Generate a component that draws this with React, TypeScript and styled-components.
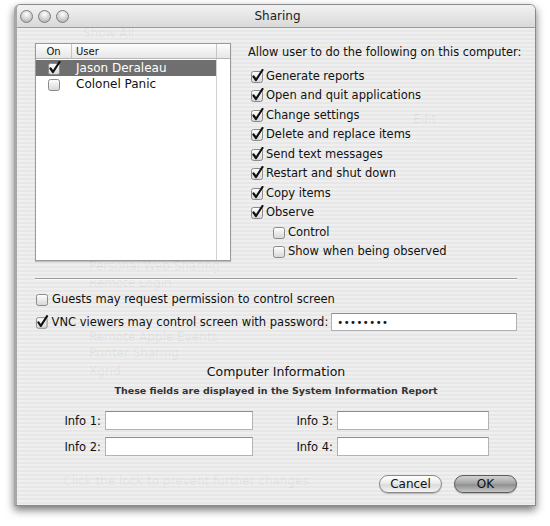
import React from "react";
import styled, { createGlobalStyle } from "styled-components";

const GlobalStyle = createGlobalStyle`
  html, body { margin: 0; padding: 0; background: #ffffff; }
  body { font-family: "DejaVu Sans", "Liberation Sans", sans-serif; color: #111; }
  * { box-sizing: border-box; }
`;

const Page = styled.div`
  width: 550px;
  height: 526px;
  padding: 4px 0 0 14px;
  background: #fff;
`;

const Window = styled.div`
  width: 522px;
  height: 502px;
  display: flex;
  flex-direction: column;
  border: 1px solid #8a8a8a;
  border-left: 3px solid #a8a8a8;
  border-radius: 6px 6px 0 0;
  overflow: hidden;
  box-shadow: 0 4px 9px rgba(0, 0, 0, 0.55);
`;

const TitleBar = styled.div`
  height: 23px;
  flex: none;
  display: grid;
  grid-template-columns: 80px 1fr 80px;
  align-items: center;
  padding-left: 3px;
  background: linear-gradient(#f2f2f2, #d9d9d9);
  border-bottom: 1px solid #9c9c9c;
`;

const Lights = styled.div`
  display: flex;
  gap: 5px;
`;

const Light = styled.span`
  width: 13px;
  height: 13px;
  border-radius: 50%;
  border: 1px solid #7d7d7d;
  background: radial-gradient(circle at 50% 30%, #ffffff 0%, #d0d0d0 55%, #a4a4a4 100%);
`;

const Title = styled.div`
  text-align: center;
  font-size: 12px;
  color: #222;
`;

const Content = styled.div`
  position: relative;
  flex: 1;
  display: flex;
  flex-direction: column;
  padding: 15px 18px 0 18px;
  background: repeating-linear-gradient(#efefef 0px, #efefef 2px, #e7e7e7 2px, #e7e7e7 4px);
`;

const GhostLayer = styled.div`
  position: absolute;
  inset: 0;
  pointer-events: none;
  font-size: 12px;
  color: rgba(0, 0, 0, 0.06);
`;

const Ghost = styled.div<{ $x: number; $y: number }>`
  position: absolute;
  left: ${(p) => p.$x}px;
  top: ${(p) => p.$y}px;
  white-space: nowrap;
`;

const Front = styled.div`
  position: relative;
  display: flex;
  flex-direction: column;
`;

const TopSection = styled.div`
  display: flex;
  gap: 17px;
  height: 218px;
`;

const UserList = styled.div`
  width: 196px;
  flex: none;
  display: flex;
  flex-direction: column;
  background: #fff;
  border: 1px solid #9a9a9a;
  box-shadow: 0 1px 1px rgba(0, 0, 0, 0.2);
`;

const ListHeader = styled.div`
  height: 15px;
  display: grid;
  grid-template-columns: 36px 145px 1fr;
  border-bottom: 1px solid #b5b5b5;
  background: linear-gradient(#fdfdfd, #e6e6e6);
  font-size: 10px;
`;

const HeaderCell = styled.div<{ $center?: boolean }>`
  display: flex;
  align-items: center;
  justify-content: ${(p) => (p.$center ? "center" : "flex-start")};
  padding-left: ${(p) => (p.$center ? "0" : "4px")};
  border-right: 1px solid #c4c4c4;
`;

const ListBody = styled.div`
  flex: 1;
  display: grid;
  grid-template-columns: 181px 1fr;
`;

const Rows = styled.div`
  display: flex;
  flex-direction: column;
  padding-top: 1px;
  border-right: 1px solid #d2d2d2;
`;

const Row = styled.div<{ $selected?: boolean }>`
  height: 16px;
  display: grid;
  grid-template-columns: 36px 1fr;
  align-items: center;
  font-size: 12px;
  color: ${(p) => (p.$selected ? "#fff" : "#111")};
  background: ${(p) => (p.$selected ? "#6f6f6f" : "transparent")};
`;

const RowCheck = styled.div`
  display: flex;
  justify-content: center;
`;

const RowName = styled.div`
  padding-left: 4px;
  white-space: nowrap;
`;

const Scroller = styled.div``;

const Permissions = styled.div`
  flex: 1;
  display: flex;
  flex-direction: column;
`;

const Heading = styled.div`
  font-size: 11.4px;
  line-height: 16px;
  margin: 1px 0 6px 0;
  white-space: nowrap;
`;

const CheckRow = styled.label<{ $indent?: number }>`
  display: flex;
  align-items: center;
  gap: 2px;
  height: 19.7px;
  padding-left: ${(p) => p.$indent ?? 2}px;
  font-size: 11.5px;
  white-space: nowrap;
`;

const Separator = styled.div`
  height: 1px;
  margin-top: 17px;
  background: #9d9d9d;
  border-bottom: 1px solid #fafafa;
  box-sizing: content-box;
`;

const OptionRow = styled.div<{ $top: number }>`
  display: flex;
  align-items: center;
  gap: 3px;
  height: 18px;
  margin-top: ${(p) => p.$top}px;
  font-size: 11.5px;
  white-space: nowrap;
`;

const PasswordField = styled.div`
  margin-left: auto;
  width: 192px;
  height: 18px;
  background: #fff;
  border: 1px solid #b0b0b0;
  border-top-color: #8e8e8e;
  display: flex;
  align-items: center;
  padding-left: 5px;
  font-size: 10px;
  letter-spacing: 0.5px;
`;

const InfoTitle = styled.div`
  margin-top: 33px;
  text-align: center;
  font-size: 12.5px;
  line-height: 16px;
`;

const InfoSubtitle = styled.div`
  margin-top: 5px;
  text-align: center;
  font-size: 9.5px;
  line-height: 12px;
  font-weight: bold;
  color: #333;
`;

const InfoGrid = styled.div`
  margin-top: 14px;
  display: grid;
  grid-template-columns: 66px 148px 76px 152px;
  column-gap: 4px;
  row-gap: 7px;
  align-items: center;
`;

const InfoLabel = styled.div`
  font-size: 11.5px;
  text-align: right;
  white-space: nowrap;
`;

const InfoField = styled.div`
  height: 19px;
  background: #fff;
  border: 1px solid #b3b3b3;
  border-top-color: #8c8c8c;
`;

const ButtonRow = styled.div`
  margin-top: 19px;
  display: flex;
  justify-content: flex-end;
  gap: 12px;
`;

const Button = styled.button<{ $default?: boolean }>`
  width: 63px;
  height: 18px;
  border-radius: 9px;
  font-family: inherit;
  font-size: 12px;
  color: #111;
  padding: 0;
  border: 1px solid ${(p) => (p.$default ? "#5d5d5d" : "#8a8a8a")};
  background: ${(p) =>
    p.$default
      ? "linear-gradient(#d2d2d2 0%, #a7a7a7 45%, #8f8f8f 55%, #c6c6c6 100%)"
      : "linear-gradient(#ffffff 0%, #ececec 45%, #dadada 55%, #f4f4f4 100%)"};
  box-shadow: 0 1px 1px rgba(0, 0, 0, 0.25);
`;

const CheckBox: React.FC<{ checked?: boolean }> = ({ checked }) => (
  <svg width="14" height="14" viewBox="0 0 14 14">
    <defs>
      <linearGradient id="cbg" x1="0" y1="0" x2="0" y2="1">
        <stop offset="0" stopColor="#ffffff" />
        <stop offset="1" stopColor="#d6d6d6" />
      </linearGradient>
    </defs>
    <rect x="1.5" y="2.5" width="11" height="11" rx="2" fill="url(#cbg)" stroke="#8a8a8a" />
    {checked && (
      <path d="M3.5 7.5 L6 11 L12.5 1" fill="none" stroke="#111" strokeWidth="2.2" strokeLinecap="round" strokeLinejoin="round" />
    )}
  </svg>
);

const permissions = [
  "Generate reports",
  "Open and quit applications",
  "Change settings",
  "Delete and replace items",
  "Send text messages",
  "Restart and shut down",
  "Copy items",
  "Observe",
];

const ghosts: { x: number; y: number; t: string }[] = [
  { x: 66, y: -2, t: "Show All" },
  { x: 396, y: 84, t: "Edit..." },
  { x: 72, y: 231, t: "Personal Web Sharing" },
  { x: 72, y: 248, t: "Remote Login" },
  { x: 72, y: 302, t: "Remote Apple Events" },
  { x: 72, y: 318, t: "Printer Sharing" },
  { x: 72, y: 336, t: "Xgrid" },
  { x: 46, y: 446, t: "Click the lock to prevent further changes." },
];

export default function App() {
  return (
    <>
      <GlobalStyle />
      <Page>
        <Window>
          <TitleBar>
            <Lights>
              <Light />
              <Light />
              <Light />
            </Lights>
            <Title>Sharing</Title>
            <div />
          </TitleBar>
          <Content>
            <GhostLayer>
              {ghosts.map((g) => (
                <Ghost key={g.t} $x={g.x} $y={g.y}>
                  {g.t}
                </Ghost>
              ))}
            </GhostLayer>
            <Front>
              <TopSection>
                <UserList>
                  <ListHeader>
                    <HeaderCell $center>On</HeaderCell>
                    <HeaderCell>User</HeaderCell>
                    <div />
                  </ListHeader>
                  <ListBody>
                    <Rows>
                      <Row $selected>
                        <RowCheck>
                          <CheckBox checked />
                        </RowCheck>
                        <RowName>Jason Deraleau</RowName>
                      </Row>
                      <Row>
                        <RowCheck>
                          <CheckBox />
                        </RowCheck>
                        <RowName>Colonel Panic</RowName>
                      </Row>
                    </Rows>
                    <Scroller />
                  </ListBody>
                </UserList>
                <Permissions>
                  <Heading>Allow user to do the following on this computer:</Heading>
                  {permissions.map((p) => (
                    <CheckRow key={p}>
                      <CheckBox checked />
                      {p}
                    </CheckRow>
                  ))}
                  <CheckRow $indent={24}>
                    <CheckBox />
                    Control
                  </CheckRow>
                  <CheckRow $indent={24}>
                    <CheckBox />
                    Show when being observed
                  </CheckRow>
                </Permissions>
              </TopSection>
              <Separator />
              <OptionRow $top={10}>
                <CheckBox />
                Guests may request permission to control screen
              </OptionRow>
              <OptionRow $top={5}>
                <CheckBox checked />
                VNC viewers may control screen with password:
                <PasswordField>••••••••</PasswordField>
              </OptionRow>
              <InfoTitle>Computer Information</InfoTitle>
              <InfoSubtitle>These fields are displayed in the System Information Report</InfoSubtitle>
              <InfoGrid>
                <InfoLabel>Info 1:</InfoLabel>
                <InfoField />
                <InfoLabel>Info 3:</InfoLabel>
                <InfoField />
                <InfoLabel>Info 2:</InfoLabel>
                <InfoField />
                <InfoLabel>Info 4:</InfoLabel>
                <InfoField />
              </InfoGrid>
              <ButtonRow>
                <Button>Cancel</Button>
                <Button $default>OK</Button>
              </ButtonRow>
            </Front>
          </Content>
        </Window>
      </Page>
    </>
  );
}
